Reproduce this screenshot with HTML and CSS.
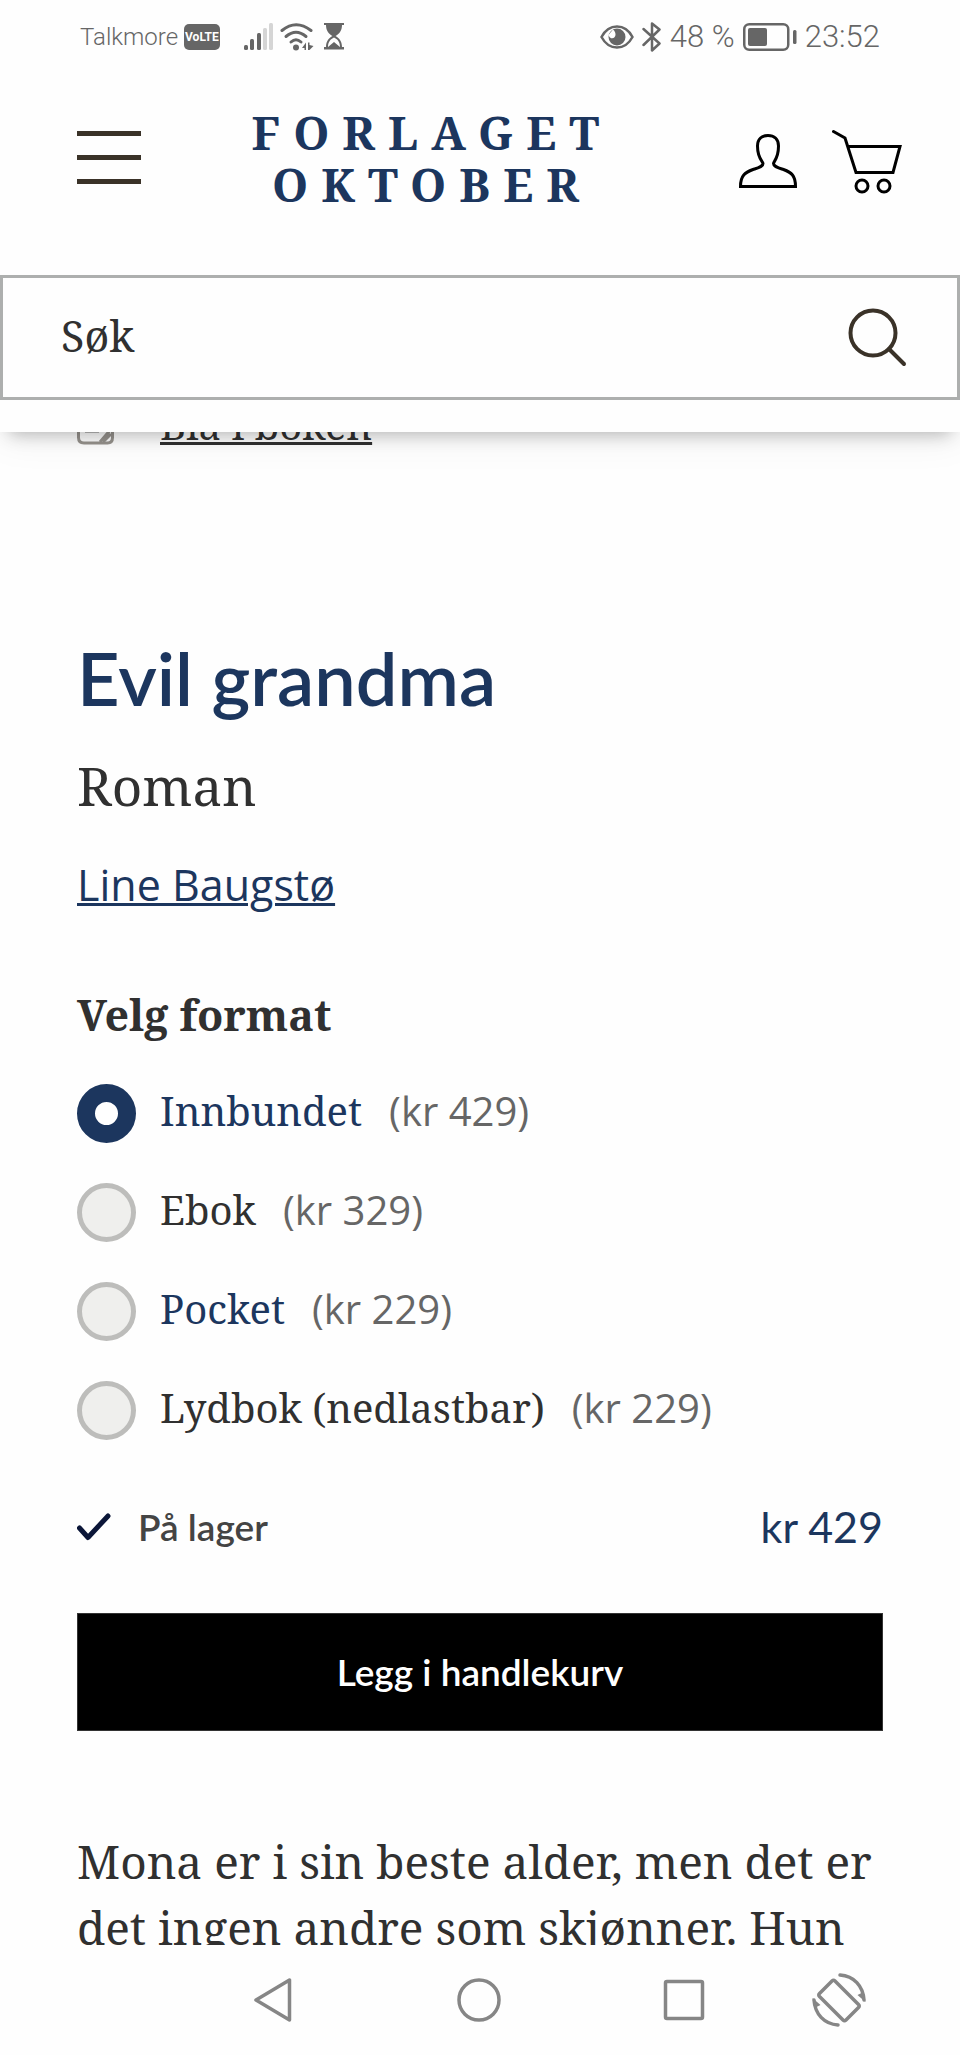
FILE: index.html
```html
<!DOCTYPE html>
<html lang="no">
<head>
    <meta charset="utf-8">
    <meta name="viewport" content="width=device-width, initial-scale=1">
    <title>Evil grandma - Forlaget Oktober</title>
    <link rel="stylesheet" href="styles.css">
</head>
<body>
    <div class="status-bar">
        <div class="status-left">
            <span class="carrier">Talkmore</span>
            <span class="volte">VoLTE</span>
            <svg class="signal" width="30" height="28" viewBox="0 0 30 28" fill="#666">
                <rect x="0" y="22" width="4" height="5" rx="1.5"/>
                <rect x="6" y="16" width="4" height="11" rx="1.5"/>
                <rect x="13" y="10" width="4" height="17" rx="1.5"/>
                <rect x="19" y="5" width="4" height="22" rx="1.5" fill="#d5d5d5"/>
                <rect x="25" y="0" width="4" height="27" rx="1.5" fill="#d5d5d5"/>
            </svg>
            <svg class="wifi" width="34" height="28" viewBox="0 0 34 28" fill="none" stroke="#666" stroke-width="3" stroke-linecap="round">
                <path d="M2 7.500Q16 -4 31 7.500"/>
                <path d="M6 13.500Q16 5 26 13.500"/>
                <path d="M11 19Q16 14.500 21 19"/>
                <circle cx="16" cy="24.500" r="3" fill="#666" stroke="none"/>
                <path d="M26 19.500v7.500h-1.500v-2H22zM28 19.500h1.500V22l4 1-4 4H28z" fill="#666" stroke="none"/>
            </svg>
            <svg class="hourglass" width="20" height="27" viewBox="0 0 20 27">
                <path d="M0 0h20v2h-2c0 6-3 9-6.500 11C15 15 18 18 18 24h2v2.500H0V24h2c0-6 3-9 6.500-11C5 11 2 8 2 2H0z" fill="#666"/>
                <path d="M4 24c0-5 2.500-8 6-9.500 3.500 1.500 6 4.500 6 9.500l-6-5z" fill="#fff"/>
            </svg>
        </div>
        <div class="status-right">
            <svg width="34" height="24" viewBox="0 0 34 24">
                <path d="M1.500 12C9-2 25-2 32.500 12 25 26 9 26 1.500 12z" fill="none" stroke="#666" stroke-width="2.500"/>
                <circle cx="17" cy="12" r="8.500" fill="#666"/>
                <path d="M8.500 10C10 15 15.500 14 15.500 9.500c0-2-1-4-2.500-5z" fill="#fff"/>
            </svg>
            <svg class="bluetooth" width="20" height="30" viewBox="0 0 20 30" fill="none" stroke="#666" stroke-width="2.500" stroke-linejoin="round" stroke-linecap="round">
                <path d="M1.500 7l16 14.500-7.500 7v-27l7.500 6L1.500 23"/>
            </svg>
            <span>48 %</span>
            <svg class="battery" width="54" height="28" viewBox="0 0 54 28">
                <rect x="1.250" y="1.250" width="44" height="25.500" rx="5" fill="none" stroke="#666" stroke-width="2.500"/>
                <rect x="5" y="5" width="19" height="18" rx="2" fill="#666"/>
                <rect x="50" y="7" width="3.500" height="14" rx="1.500" fill="#666"/>
            </svg>
            <span>23:52</span>
        </div>
    </div>

    <header class="header">
        <div class="header-row">
            <button class="icon-btn" aria-label="Meny">
                <svg width="64" height="54" viewBox="0 0 64 54" fill="#3a3228">
                    <rect y="0" width="64" height="5"/>
                    <rect y="24" width="64" height="5"/>
                    <rect y="48" width="64" height="5"/>
                </svg>
            </button>
            <a class="logo" href="#">FORLAGET<br>OKTOBER</a>
            <div class="header-icons">
                <button class="icon-btn" aria-label="Min side">
                    <svg width="58" height="66" viewBox="0 0 58 66" fill="none" stroke="#000" stroke-width="3">
                        <path d="M1.500 57.500h55c0-11-4-14-12-17-6-2-10-3-10-6 0-2 5-5 5-17.500C39.500 10 35 6.500 29 6.500S18.500 10 18.500 17c0 12.500 5.500 15.500 5.500 17.500 0 3-4 4-10 6-8 3-12.500 6-12.500 17z"/>
                    </svg>
                </button>
                <button class="icon-btn" aria-label="Handlekurv">
                    <svg width="70" height="66" viewBox="0 0 70 66" fill="none" stroke="#000" stroke-width="3">
                        <path d="M1.500 2.500L13 9l11 34.500h37L68 17.500H16" stroke-linecap="round"/>
                        <circle cx="30" cy="57" r="6"/>
                        <circle cx="52" cy="57" r="6"/>
                    </svg>
                </button>
            </div>
        </div>
        <form class="search">
            <input class="search-input" type="text" placeholder="Søk" aria-label="Søk">
            <button class="icon-btn" type="button" aria-label="Søk">
                <svg width="60" height="62" viewBox="0 0 60 62" fill="none" stroke="#3a3228" stroke-width="4" stroke-linecap="round">
                    <circle cx="26" cy="26" r="22.500"/>
                    <path d="M42 42l15 15"/>
                </svg>
            </button>
        </form>
    </header>

    <main class="product">
        <div class="preview">
            <svg width="38" height="40" viewBox="0 0 38 40" fill="none" stroke="#96928d" stroke-width="3">
                <path d="M35.500 1.500v31c0 3.500-2 5.500-5 5.500H7c-3.500 0-5.500-2-5.500-5.500v-31z"/>
                <path d="M8 26h14" stroke="#777"/>
                <path d="M35 23L23 37M34 29l-8 8"/>
            </svg>
            <a class="preview-link" href="#">Bla i boken</a>
        </div>

        <h1 class="title">Evil grandma</h1>
        <p class="subtitle">Roman</p>
        <a class="author" href="#">Line Baugstø</a>

        <fieldset class="formats">
            <legend class="formats-title">Velg format</legend>
            <label class="format">
                <input class="radio" type="radio" name="format" checked>
                <span class="format-name blue">Innbundet</span>
                <span class="format-price">(kr 429)</span>
            </label>
            <label class="format">
                <input class="radio" type="radio" name="format">
                <span class="format-name">Ebok</span>
                <span class="format-price">(kr 329)</span>
            </label>
            <label class="format">
                <input class="radio" type="radio" name="format">
                <span class="format-name blue">Pocket</span>
                <span class="format-price">(kr 229)</span>
            </label>
            <label class="format">
                <input class="radio" type="radio" name="format">
                <span class="format-name">Lydbok (nedlastbar)</span>
                <span class="format-price">(kr 229)</span>
            </label>
        </fieldset>

        <div class="stock-row">
            <svg width="34" height="28" viewBox="0 0 34 28" fill="none" stroke="#0b1638" stroke-width="5" stroke-linecap="round" stroke-linejoin="round">
                <path d="M2.500 15l8.500 9.500L31 3"/>
            </svg>
            <span class="stock">På lager</span>
            <span class="price">kr 429</span>
        </div>
        <button class="buy-btn">Legg i handlekurv</button>

        <p class="description">Mona er i sin beste alder, men det er det ingen andre som skjønner. Hun</p>
    </main>

    <nav class="phone-nav">
        <button class="icon-btn" aria-label="Tilbake">
            <svg width="40" height="46" viewBox="0 0 40 46" fill="none" stroke="#868686" stroke-width="3.500" stroke-linejoin="round">
                <path d="M36.500 3v40L3 23z"/>
            </svg>
        </button>
        <button class="icon-btn" aria-label="Hjem">
            <svg width="44" height="44" viewBox="0 0 44 44" fill="none" stroke="#868686" stroke-width="3.500">
                <circle cx="22" cy="22" r="20"/>
            </svg>
        </button>
        <button class="icon-btn" aria-label="Siste apper">
            <svg width="42" height="42" viewBox="0 0 42 42" fill="none" stroke="#868686" stroke-width="3.500">
                <rect x="2.500" y="2.500" width="37" height="37" rx="1.500"/>
            </svg>
        </button>
        <button class="icon-btn" aria-label="Roter">
            <svg width="56" height="56" viewBox="0 0 56 56" fill="none" stroke="#868686" stroke-width="3.500" stroke-linejoin="round">
                <path d="M21 9L8.500 21.500q-1.500 1.500 0 3L32 48q1.500 1.500 3 0l12.500-12.500q1.500-1.500 0-3L24 9q-1.500-1.500-3 0z"/>
                <path d="M29 3c14 1 23 11 24 25M27 53C13 52 4 42 3 28" stroke-linecap="round"/>
                <path d="M54.500 30l-8-7 6-3zM1.500 26l8 7-6 3z" fill="#868686" stroke="none"/>
            </svg>
        </button>
    </nav>
</body>
</html>
```

FILE: styles.css
```css
* {
    box-sizing: border-box;
}

body {
    margin: 0;
    height: 100vh;
    display: flex;
    flex-direction: column;
    overflow: hidden;
    background: #fefefe;
    color: #303030;
    font-family: "Noto Serif", "Liberation Serif", serif;
}

svg {
    display: block;
    flex-shrink: 0;
}

.icon-btn {
    display: flex;
    align-items: center;
    justify-content: center;
    padding: 0;
    border: 0;
    background: none;
}

/* phone status bar */
.status-bar {
    position: relative;
    z-index: 2;
    display: flex;
    justify-content: space-between;
    align-items: center;
    height: 73px;
    padding: 0 80px;
    background: #fefefe;
    color: #666;
    font-family: Roboto, sans-serif;
    font-size: 31px;
    font-weight: 300;
}

.status-left,
.status-right {
    display: flex;
    align-items: center;
    gap: 8px;
}

.status-left {
    gap: 6px;
}

.carrier {
    font-size: 24px;
}

.volte {
    padding: 0 1px;
    border-radius: 5px;
    background: #666;
    color: #fff;
    font-size: 12px;
    font-weight: 700;
    line-height: 26px;
}

.signal {
    margin-left: 18px;
}

.hourglass {
    margin-left: 4px;
}

/* header */
.header {
    position: relative;
    z-index: 1;
    padding-bottom: 32px;
    background: #fefefe;
    box-shadow: 0 0 40px rgba(0, 0, 0, 0.1), 0 12px 16px -10px rgba(0, 0, 0, 0.25);
}

.header-row {
    display: flex;
    justify-content: space-between;
    align-items: center;
    padding: 33px 58px 65px 77px;
}

.logo {
    margin-right: 16px;
    color: #1c365e;
    font-size: 46px;
    font-weight: 700;
    line-height: 52px;
    letter-spacing: 13px;
    text-align: center;
    text-decoration: none;
}

.header-icons {
    display: flex;
    gap: 35px;
    padding-top: 8px;
}

.search {
    display: flex;
    align-items: center;
    height: 125px;
    padding: 0 50px 0 58px;
    border: 3px solid #adafae;
}

.search-input {
    flex: 1;
    min-width: 0;
    padding: 0 0 4px;
    border: 0;
    outline: 0;
    background: none;
    color: #303030;
    font-family: inherit;
    font-size: 43px;
}

.search-input::placeholder {
    color: #303030;
    opacity: 1;
}

/* product */
.product {
    flex: 1;
    min-height: 0;
    overflow: hidden;
    padding: 0 77px;
}

.preview {
    display: flex;
    align-items: center;
    gap: 45px;
    margin-top: -37px;
}

.preview-link {
    color: #303030;
    font-size: 40px;
    line-height: 60px;
    text-decoration-thickness: 3px;
}

.title {
    margin: 179px 0 0;
    color: #1c365e;
    font-family: Lato, sans-serif;
    font-size: 74px;
    font-weight: 600;
    line-height: 88px;
}

.subtitle {
    margin: 28px 0 34px;
    font-size: 53px;
    line-height: 72px;
}

.author {
    display: block;
    width: fit-content;
    color: #1c365e;
    font-family: "Open Sans", sans-serif;
    font-size: 43px;
    line-height: 58px;
    text-decoration-thickness: 3px;
}

.formats {
    display: flex;
    flex-direction: column;
    gap: 39px;
    margin: 71px 0 0;
    padding: 0;
    border: 0;
}

.formats-title {
    padding: 0;
    margin-bottom: 38px;
    font-size: 43px;
    font-weight: 700;
    line-height: 60px;
}

.format {
    display: flex;
    align-items: center;
    height: 60px;
}

.radio {
    appearance: none;
    flex-shrink: 0;
    width: 59px;
    height: 59px;
    margin: 0 24px 0 0;
    border: 5px solid #bdbdbb;
    border-radius: 50%;
    background: #efefed;
}

.radio:checked {
    border: 18px solid #1c365e;
    background: #fff;
}

.format-name,
.format-price {
    padding-bottom: 4px;
    font-size: 40px;
    line-height: 54px;
}

.format-price {
    margin-left: 27px;
    color: #666;
    font-family: "Open Sans", sans-serif;
}

.blue {
    color: #1c365e;
}

.stock-row {
    display: flex;
    align-items: center;
    margin-top: 59px;
    font-family: Lato, sans-serif;
    line-height: 56px;
}

.stock {
    margin-left: 27px;
    color: #444;
    font-size: 37px;
    font-weight: 600;
}

.price {
    margin-left: auto;
    color: #1c365e;
    font-size: 43px;
}

.buy-btn {
    width: 100%;
    height: 118px;
    margin-top: 58px;
    padding-bottom: 3px;
    border: 1px solid #333;
    background: #000;
    color: #fff;
    font-family: Lato, sans-serif;
    font-size: 37px;
    font-weight: 600;
}

.description {
    margin: 97px 0 0;
    font-size: 46px;
    line-height: 66px;
}

/* phone buttons */
.phone-nav {
    display: grid;
    grid-template-columns: 2fr 2fr 2fr 1fr;
    height: 110px;
    padding: 0 70px 0 170px;
    background: #fefefe;
}
```
